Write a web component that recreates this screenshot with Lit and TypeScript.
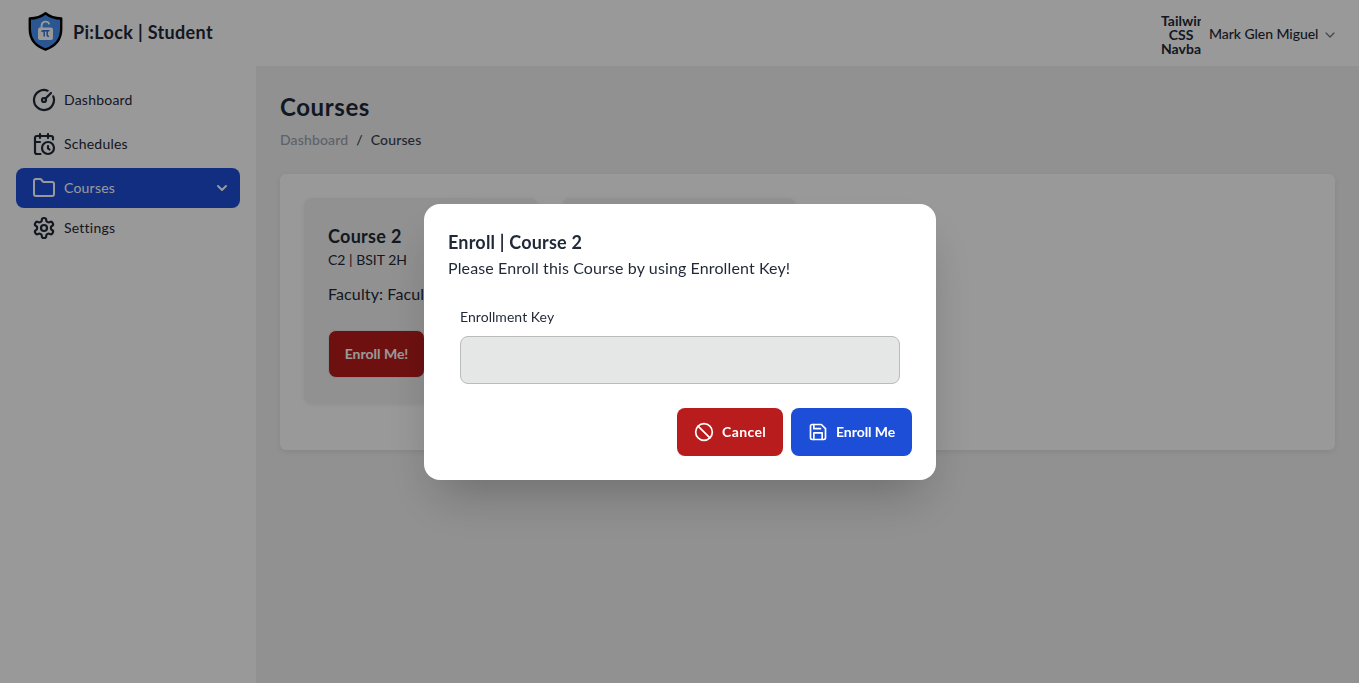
import { LitElement, html, css, svg } from "lit";
import { customElement } from "lit/decorators.js";

const icon = (body: unknown, size = 24, width = 2) => html`<svg
  width=${size} height=${size} viewBox="0 0 24 24" fill="none" stroke="currentColor"
  stroke-width=${width} stroke-linecap="round" stroke-linejoin="round">${body}</svg>`;

const gauge = svg`<path d="M15.6 2.7a10 10 0 1 0 5.7 5.7"/><circle cx="12" cy="12" r="2"/><path d="M13.4 10.6 19 5"/>`;
const calendar = svg`<path d="M21 7.5V6a2 2 0 0 0-2-2H5a2 2 0 0 0-2 2v14a2 2 0 0 0 2 2h3.5"/><path d="M16 2v4M8 2v4M3 10h5M17.5 17.5 16 16.3V14"/><circle cx="16" cy="16" r="6"/>`;
const folder = svg`<path d="M4 20h16a2 2 0 0 0 2-2V8a2 2 0 0 0-2-2h-7.93a2 2 0 0 1-1.66-.9l-.82-1.2A2 2 0 0 0 7.93 3H4a2 2 0 0 0-2 2v13c0 1.1.9 2 2 2Z"/>`;
const cog = svg`<path d="M12.22 2h-.44a2 2 0 0 0-2 2v.18a2 2 0 0 1-1 1.73l-.43.25a2 2 0 0 1-2 0l-.15-.08a2 2 0 0 0-2.73.73l-.22.38a2 2 0 0 0 .73 2.73l.15.1a2 2 0 0 1 1 1.72v.51a2 2 0 0 1-1 1.74l-.15.09a2 2 0 0 0-.73 2.73l.22.38a2 2 0 0 0 2.73.73l.15-.08a2 2 0 0 1 2 0l.43.25a2 2 0 0 1 1 1.73V20a2 2 0 0 0 2 2h.44a2 2 0 0 0 2-2v-.18a2 2 0 0 1 1-1.73l.43-.25a2 2 0 0 1 2 0l.15.08a2 2 0 0 0 2.73-.73l.22-.39a2 2 0 0 0-.73-2.73l-.15-.08a2 2 0 0 1-1-1.74v-.5a2 2 0 0 1 1-1.74l.15-.09a2 2 0 0 0 .73-2.73l-.22-.38a2 2 0 0 0-2.73-.73l-.15.08a2 2 0 0 1-2 0l-.43-.25a2 2 0 0 1-1-1.73V4a2 2 0 0 0-2-2z"/><circle cx="12" cy="12" r="3"/>`;
const chevron = svg`<path d="m6 9 6 6 6-6"/>`;
const wideChevron = svg`<path d="m4 8 8 8 8-8"/>`;
const ban = svg`<circle cx="12" cy="12" r="10"/><path d="m4.9 4.9 14.2 14.2"/>`;
const save = svg`<path d="M19 21H5a2 2 0 0 1-2-2V5a2 2 0 0 1 2-2h11l5 5v11a2 2 0 0 1-2 2z"/><path d="M17 21v-8H7v8M7 3v5h8"/>`;

@customElement("app-root")
export class AppRoot extends LitElement {
  static styles = css`
    :host {
      display: block;
      height: 100vh;
      overflow: hidden;
      background: #f2f2f2;
      color: #1f2937;
      font: 400 14px/20px Lato, "Open Sans", sans-serif;
      font-variant-ligatures: none;
    }
    * { box-sizing: border-box; margin: 0; }
    svg { display: block; flex: none; }
    .header {
      height: 66px;
      background: #fff;
      display: flex;
      justify-content: space-between;
      padding: 0 23px 0 28px;
    }
    .brand { display: flex; align-items: center; gap: 10px; padding-bottom: 3px; }
    .brand-name { font-size: 18px; font-weight: 700; letter-spacing: 0.34px; }
    .user { display: flex; align-items: center; padding-top: 3px; font-weight: 500; }
    .avatar {
      width: 40px; height: 42px; overflow: hidden;
      font-weight: 700; line-height: 14px; text-align: center;
      margin-right: 8px;
    }
    .user-name { width: 109px; white-space: nowrap; margin-right: 6px; letter-spacing: -0.06px; padding-bottom: 1px; }
    .user svg { color: #6b7280; }
    .body { display: flex; height: calc(100vh - 66px); }
    .side { width: 256px; background: #fff; padding: 14px 16px; flex: none; letter-spacing: 0.22px; }
    .item {
      height: 40px; display: flex; align-items: center; gap: 8px;
      padding: 0 10px 0 16px; border-radius: 8px; margin-bottom: 4px;
    }
    .item.active { background: #1d4ed8; color: #fff; margin-bottom: 0; }
    .grow { flex: 1; }
    .main { flex: 1; padding: 25px 24px 24px; }
    h1 { font-size: 24px; line-height: 32px; font-weight: 700; letter-spacing: 0.6px; }
    .crumbs { display: flex; gap: 8px; margin-top: 7px; font-weight: 500; color: #374151; letter-spacing: 0.14px; }
    .muted { color: #9ca3af; }
    .panel {
      margin-top: 24px; height: 276px; background: #fff; border-radius: 6px; padding: 24px;
      display: grid; grid-template-columns: repeat(4, 1fr); gap: 24px; align-items: start;
      box-shadow: 0 2px 6px rgba(0,0,0,.08);
    }
    .card {
      height: 206px; background: #f2f2f2; border-radius: 8px; padding: 24px;
      box-shadow: 0 1px 5px rgba(0,0,0,.06);
    }
    h2 { font-size: 18px; line-height: 28px; font-weight: 700; letter-spacing: 0.3px; }
    .modal h2 { letter-spacing: 0.2px; }
    .faculty { font-size: 16px; line-height: 24px; margin-top: 12px; white-space: nowrap; letter-spacing: 0.12px; }
    .enroll {
      display: flex; align-items: center; justify-content: center;
      width: 97px; height: 48px; margin-top: 24px;
      border: 1px solid #e5e6e6; border-radius: 8px;
      background: #b91c1c; color: #fff; font-weight: 700;
    }
    .overlay {
      position: fixed; inset: 0; background: rgba(0,0,0,.4);
      display: grid; place-content: center; padding: 1px 0 0 1px;
    }
    .modal {
      width: 512px; height: 276px; background: #fff; border-radius: 16px; padding: 24px;
      box-shadow: 0 25px 50px -12px rgba(0,0,0,.25);
    }
    .message { font-size: 16px; line-height: 24px; white-space: nowrap; letter-spacing: 0.12px; }
    .field { padding: 0 12px; margin-top: 27px; letter-spacing: 0.05px; }
    .input {
      display: block; width: 100%; height: 48px; margin-top: 9px;
      border: 1px solid #b9bcbd; border-radius: 8px; background: #e5e6e6;
    }
    .actions { display: flex; justify-content: flex-end; gap: 8px; margin-top: 24px; }
    .btn {
      height: 48px; border-radius: 8px; padding-left: 17px; display: flex; align-items: center;
      gap: 8px; color: #fff; font-weight: 700; white-space: nowrap;
    }
    .cancel { width: 106px; background: #b91c1c; letter-spacing: 0.4px; }
    .confirm { width: 121px; background: #1d4ed8; letter-spacing: -0.05px; }
  `;

  render() {
    return html`
      <header class="header">
        <div class="brand">
          <svg width="35" height="39" viewBox="0 0 35 39">
            <path d="M17.5 1.3C13 5 8 6.5 1.8 6.5V17c0 10 5.500 17 15.700 20.600C27.700 34 33.200 27 33.200 17V6.500C27 6.500 22 5 17.500 1.300Z" fill="#4691f2" stroke="#000" stroke-width="2.400" stroke-linejoin="round"/>
            <path d="M13.600 16v-2.600a4 4 0 0 1 7.800-1" fill="none" stroke="#fff" stroke-width="1.800"/>
            <rect x="10" y="15.500" width="15" height="12.500" rx="2" fill="#fff"/>
            <path d="M13.500 19.700q.7-1 2-1h6M16.200 19v5.500M19.200 19v4.500q.1 1 1.800.7" fill="none" stroke="#3678d4" stroke-width="1.500"/>
          </svg>
          <span class="brand-name">Pi:Lock | Student</span>
        </div>
        <div class="user">
          <div class="avatar">Tailwind CSS Navbar</div>
          <span class="user-name">Mark Glen Miguel</span>
          ${icon(wideChevron, 12, 2.4)}
        </div>
      </header>
      <div class="body">
        <nav class="side">
          <div class="item">${icon(gauge, 24, 2.2)}<span>Dashboard</span></div>
          <div class="item">${icon(calendar, 24, 2.2)}<span>Schedules</span></div>
          <div class="item active">${icon(folder)}<span class="grow">Courses</span>${icon(chevron, 16, 3)}</div>
          <div class="item">${icon(cog, 24, 2.2)}<span>Settings</span></div>
        </nav>
        <main class="main">
          <h1><span>Courses</span></h1>
          <div class="crumbs"><span class="muted">Dashboard</span><span>/</span><span>Courses</span></div>
          <section class="panel">
            <article class="card">
              <h2><span>Course 2</span></h2>
              <div>C2 | BSIT 2H</div>
              <div class="faculty">Faculty: Faculty</div>
              <div class="enroll">Enroll Me!</div>
            </article>
            <article class="card"></article>
          </section>
        </main>
      </div>
      <div class="overlay">
        <div class="modal">
          <h2><span>Enroll | Course 2</span></h2>
          <div class="message"><span>Please Enroll this Course by using Enrollent Key!</span></div>
          <div class="field"><span>Enrollment Key</span><input class="input" /></div>
          <div class="actions">
            <div class="btn cancel">${icon(ban, 20)}<span>Cancel</span></div>
            <div class="btn confirm">${icon(save, 20)}<span>Enroll Me</span></div>
          </div>
        </div>
      </div>
    `;
  }
}
